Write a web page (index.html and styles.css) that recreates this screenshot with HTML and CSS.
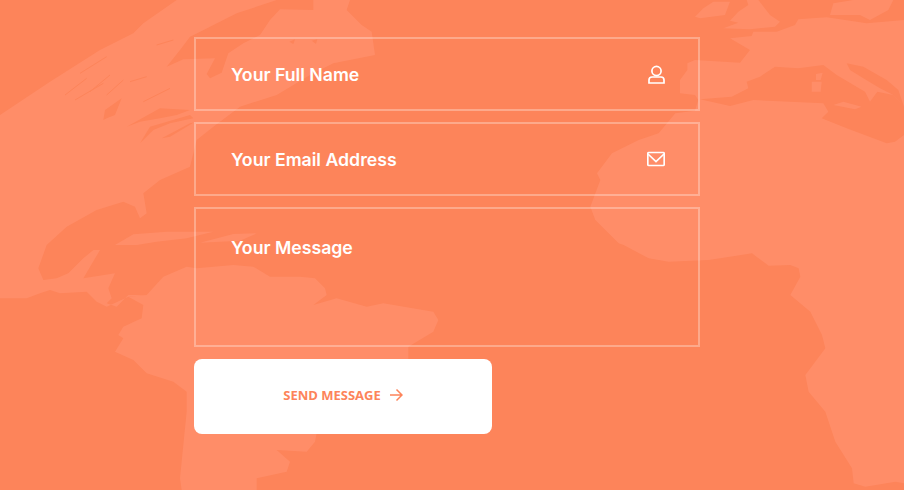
FILE: index.html
```html
<!DOCTYPE html>
<html lang="en">

<head>
  <meta charset="UTF-8">
  <meta name="viewport" content="width=device-width, initial-scale=1.0">
  <title>Contact</title>
  <link rel="stylesheet" href="styles.css">
</head>

<body>
  <!-- Map backdrop, coordinates are 3x page pixels -->
  <svg class="map" viewBox="0 0 2712 1470" aria-hidden="true">
    <g class="land">
      <!-- North and Central America -->
      <path d="M0 345L150 245 300 150 400 100 430 70 530 0H1050L1040 30 1085 75 1115 95 1125 165 1000 190 930 225 830 285 720 320 640 380 590 420 570 500 480 540 430 580 440 640 420 655 405 620 370 605 290 630 200 680 140 735 115 805 130 840 170 835 205 820 250 775 280 750 300 750 250 835 345 820 325 865 335 895 320 910 350 920 385 885 440 885 385 890 320 920 290 905 260 875 180 880 150 870 120 880 80 895H0Z" />
      <path d="M345 735L400 703 500 695 640 695 560 715 470 725 410 735Z" />
      <path d="M600 728L700 702 770 700 720 722Z" />
      <!-- South America -->
      <path d="M440 885L490 830 560 800 590 805 700 795 760 800 810 830 900 830 945 835 975 865 980 885 940 915 1010 895 1100 920 1150 910 1300 935 1315 960 1300 995 1225 1040V1090L950 1300 945 1325 920 1355 830 1350 870 1385 860 1415 770 1435V1470H545L540 1435 550 1335 560 1235V1175L520 1145 440 1120 400 1080 345 1055 370 1015 355 1005 370 980 425 955 430 915 385 890Z" />
      <!-- Europe and Africa -->
      <path d="M2085 180L2220 188 2250 150 2190 115 2255 108 2260 95 2330 95 2385 75 2395 58 2480 52 2600 70 2712 60V1450L2686 1445 2596 1460 2561 1450 2556 1405 2506 1325 2476 1235 2426 1175 2416 1125 2476 1045 2466 1005 2431 935 2371 885 2401 830 2396 805 2371 795 2306 797 2256 760 2126 780 2006 785 1946 775 1871 735 1856 730 1786 660 1771 620 1801 540 1791 520 1836 460 1916 420 1976 400 2026 340 2085 332 2095 300 2085 285 2040 280V240L2062 210V190Z" />
      <path d="M2085 50L2110 25 2140 5H2190L2175 45 2100 55Z" />
      <path d="M2170 85L2215 68 2190 62 2215 35 2245 15 2240 0H2275L2310 45 2340 65 2325 80 2250 88Z" />
      <path d="M2490 45L2500 10 2560 0H2680L2665 30 2610 60 2580 45Z" />
    </g>
    <g class="sea">
      <!-- Hudson band -->
      <path d="M500 200L550 178 645 175 620 222 630 235 665 218 685 160 730 130 780 105 810 60 840 28 940 30V0H830L710 40 630 80 570 110 540 150Z" />
      <!-- Lakes and inlets -->
      <path d="M380 380L480 325 570 330 530 345 480 355 420 365Z" />
      <path d="M420 430L450 380 570 345 580 355 510 370 460 390Z" />
      <path d="M485 415L570 370 580 368 510 410Z" />
      <path d="M310 360L315 330 365 295 345 345 320 355Z" />
      <path d="M868 125L885 118 880 132Z" />
      <path d="M935 122L952 118 948 132Z" />
      <!-- Mediterranean -->
      <path d="M2100 298L2195 290 2245 265 2240 245 2280 230 2325 200 2395 205 2470 195 2510 225 2595 275 2610 305 2632 275 2680 285 2712 320V405L2685 425 2660 430 2540 385 2465 355 2485 335 2470 310 2260 300 2190 318Z" />
      <path d="M2540 190L2590 200 2660 240 2695 270 2712 320 2680 285 2640 265 2590 235 2550 210Z" />
      <path class="streaks" d="M195 285L260 235M225 300L310 250M240 220L320 170M430 305L510 265M390 245L440 230M320 285L370 240M470 135L520 120M270 275L330 225" />
    </g>
    <g class="land">
      <path d="M2435 245H2465L2462 275H2435Z" />
      <path d="M2448 222L2468 218 2462 240H2448Z" />
      <path d="M2530 305L2585 320 2565 328 2500 315Z" />
    </g>
  </svg>

  <form class="contact-form">
    <label class="field">
      <input type="text" placeholder="Your Full Name">
      <svg class="field-icon" width="18" height="20" viewBox="0 0 18 20">
        <circle cx="9.5" cy="7" r="4.6" />
        <path d="M5 13H14C15.8 13 17 14.2 17 16V19H2V16C2 14.2 3.2 13 5 13Z" />
      </svg>
    </label>
    <label class="field">
      <input type="text" placeholder="Your Email Address">
      <svg class="field-icon" width="18" height="20" viewBox="0 0 18 20">
        <rect x="0.8" y="3.5" width="16.4" height="13" rx="1" />
        <path d="M1 5L9 12.5 17 5" />
      </svg>
    </label>
    <label class="field field-message">
      <textarea placeholder="Your Message"></textarea>
    </label>
    <button class="send-btn" type="button">
      SEND MESSAGE
      <svg width="14" height="14" viewBox="0 0 14 14">
        <path d="M1 7H13M7.5 1.5L13 7 7.5 12.5" />
      </svg>
    </button>
  </form>
</body>

</html>
```

FILE: styles.css
```css
body {
  margin: 0;
  height: 490px;
  overflow: hidden;
  position: relative;
  background: #fd845a;
  font-family: "Inter", "Liberation Sans", sans-serif;
}

.map {
  position: absolute;
  top: 0;
  left: 0;
  width: 904px;
  height: 490px;
}

.land {
  fill: #ff8d68;
}

.sea {
  fill: #fd845a;
}

.streaks {
  fill: none;
  stroke: #fd845a;
  stroke-width: 3;
}

.contact-form {
  position: relative;
  width: 506px;
  padding: 37px 0 0 194px;
  display: flex;
  flex-direction: column;
  gap: 11px;
}

.field {
  height: 74px;
  box-sizing: border-box;
  display: flex;
  align-items: center;
  border: 2px solid rgba(255, 255, 255, 0.3);
  padding: 0 33px 0 35px;
}

.field input,
.field textarea {
  flex: 1;
  min-width: 0;
  padding: 0;
  border: none;
  outline: none;
  background: transparent;
  color: #fff;
  font-family: inherit;
  font-size: 17.7px;
  font-weight: 600;
}

.field-message {
  height: 140px;
  align-items: stretch;
  padding-top: 28px;
}

.field input::placeholder,
.field textarea::placeholder {
  color: #fff;
  opacity: 1;
}

.field-message textarea {
  resize: none;
}

.field-icon {
  fill: none;
  stroke: #fff;
  stroke-width: 1.7;
}

.send-btn {
  width: 298px;
  height: 75px;
  margin-top: 1px;
  padding: 0 0 3px;
  display: flex;
  align-items: center;
  justify-content: center;
  gap: 8px;
  border: none;
  border-radius: 8px;
  background: #fff;
  color: #fd845a;
  font-family: "Open Sans", sans-serif;
  font-size: 13px;
  font-weight: 700;
  cursor: pointer;
}

.send-btn svg {
  fill: none;
  stroke: #fd845a;
  stroke-width: 1.5;
}
```
